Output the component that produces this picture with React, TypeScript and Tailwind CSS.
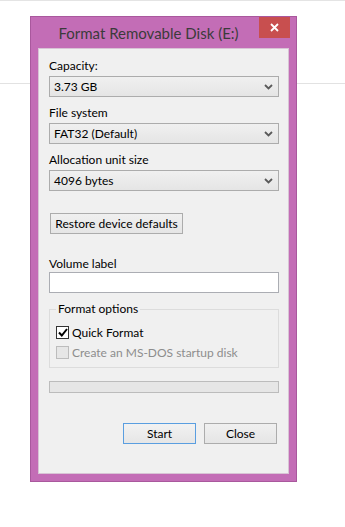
import React from "react";

const font = { fontFamily: 'Lato, "Noto Sans", sans-serif' };

function Chevron() {
  return (
    <svg width="9" height="6" viewBox="0 0 9 6" className="shrink-0">
      <path d="M1 1 L4.5 4.5 L8 1" fill="none" stroke="#5a5a5a" strokeWidth="1.8" />
    </svg>
  );
}

function Select({ value }: { value: string }) {
  return (
    <div className="flex h-[21px] w-[230px] items-center justify-between border border-[#acacac] bg-gradient-to-b from-[#f0f0f0] to-[#e5e5e5] pl-[4px] pr-[5px] text-[12px] leading-[15px] text-[#000]">
      <span>{value}</span>
      <Chevron />
    </div>
  );
}

function Label({ text, className = "" }: { text: string; className?: string }) {
  return <div className={`text-[12px] leading-[15px] text-black ${className}`}>{text}</div>;
}

export default function App() {
  return (
    <div className="relative h-[527px] w-[345px] overflow-hidden border-t border-[#e4e4e4] bg-white" style={font}>
      <div className="absolute left-0 top-[82px] h-px w-[345px] bg-[#e2e2e2]" />
      <div className="relative ml-[30px] mt-[15px] flex h-[466px] w-[267px] flex-col border border-[#a9589d] bg-[#c36db6]">
        <div className="flex h-[31px] pl-[7px] pr-[6px]">
          <div className="flex flex-1 items-center justify-center pt-[1px] text-[15px] text-[#3b3b3b]">
            Format Removable Disk (E:)
          </div>
          <div className="flex h-[21px] w-[31px] items-center justify-center bg-[#c84f4f]">
            <svg width="9" height="9" viewBox="0 0 9 9">
              <path d="M1 1 L8 8 M8 1 L1 8" stroke="#fff" strokeWidth="1.8" />
            </svg>
          </div>
        </div>
        <div className="mx-[7px] mb-[7px] flex flex-1 flex-col border border-[#d8c4d5] bg-[#f0f0f0] pl-[10px] pt-[9px]">
          <Label text="Capacity:" />
          <div className="mt-[3px]"><Select value="3.73 GB" /></div>
          <Label text="File system" className="mt-[8px]" />
          <div className="mt-[3px]"><Select value="FAT32 (Default)" /></div>
          <Label text="Allocation unit size" className="mt-[8px]" />
          <div className="mt-[3px]"><Select value="4096 bytes" /></div>
          <div className="ml-[1px] mt-[22px] flex h-[21px] w-[133px] items-center justify-center border border-[#acacac] bg-gradient-to-b from-[#f0f0f0] to-[#e5e5e5] text-[12px] text-black">
            Restore device defaults
          </div>
          <Label text="Volume label" className="mt-[22px]" />
          <div className="mt-[1px] h-[21px] w-[230px] border border-[#abadb3] bg-white" />
          <div className="relative mt-[16px] h-[59px] w-[230px] border border-[#dcdcdc]">
            <div className="absolute left-[6px] top-[-9px] bg-[#f0f0f0] px-[2px] text-[12px] leading-[15px] text-black">
              Format options
            </div>
            <div className="flex flex-col pl-[6px] pt-[15px]">
              <div className="flex items-center gap-[3px]">
                <div className="flex h-[13px] w-[13px] items-center justify-center border border-[#333] bg-white">
                  <svg width="10" height="9" viewBox="0 0 10 9">
                    <path d="M1 4.5 L3.8 7.5 L9 1" fill="none" stroke="#000" strokeWidth="2" />
                  </svg>
                </div>
                <span className="text-[12px] leading-[15px] text-black">Quick Format</span>
              </div>
              <div className="mt-[5px] flex items-center gap-[3px]">
                <div className="h-[13px] w-[13px] border border-[#bcbcbc] bg-[#e6e6e6]" />
                <span className="text-[12px] leading-[15px] text-[#8d8d8d]">Create an MS-DOS startup disk</span>
              </div>
            </div>
          </div>
          <div className="mt-[13px] h-[12px] w-[230px] border border-[#bcbcbc] bg-[#e6e6e6]" />
          <div className="mt-[30px] flex w-[228px] justify-end gap-[8px]">
            <div className="flex h-[21px] w-[73px] items-center justify-center border border-[#5a9ee0] bg-gradient-to-b from-[#f2f2f2] to-[#e6e6e6] text-[12px] text-black">
              Start
            </div>
            <div className="flex h-[21px] w-[73px] items-center justify-center border border-[#acacac] bg-gradient-to-b from-[#f0f0f0] to-[#e5e5e5] text-[12px] text-black">
              Close
            </div>
          </div>
        </div>
      </div>
    </div>
  );
}
